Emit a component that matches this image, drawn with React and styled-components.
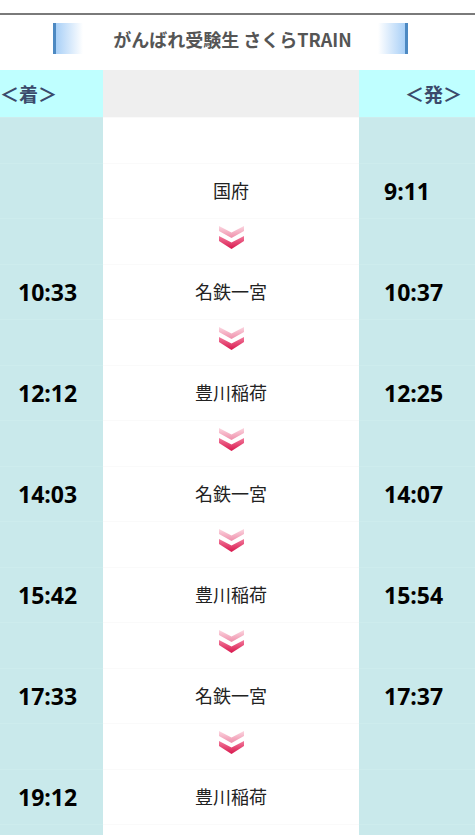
import React from "react";
import styled, { createGlobalStyle } from "styled-components";

const Global = createGlobalStyle`
  html, body { margin: 0; padding: 0; background: #fff; }
  body { font-family: "Noto Sans CJK JP", "Noto Sans", sans-serif; overflow: hidden; }
`;

const Page = styled.div`
  width: 475px;
`;

const TopRule = styled.div`
  height: 13px;
  border-bottom: 2px solid #7a7a7a;
`;

const TitleBar = styled.div`
  height: 55px;
  box-sizing: border-box;
  display: flex;
  align-items: center;
  justify-content: center;
  padding-right: 14px;
  padding-bottom: 8px;
`;

const Deco = styled.div`
  width: 30px;
  height: 31px;
  box-sizing: border-box;
  ${(p) =>
    p.$right
      ? `border-right: 3px solid #4d89c2; background: linear-gradient(to left, #a9d0f7, #ffffff);`
      : `border-left: 3px solid #4d89c2; background: linear-gradient(to right, #a9d0f7, #ffffff);`}
`;

const Title = styled.h1`
  margin: 0;
  width: 295px;
  text-align: center;
  font-family: "Noto Sans CJK JP", "Noto Sans", sans-serif;
  font-size: 18px;
  font-weight: 700;
  color: #555;
  line-height: 1;
  padding-left: 4px;
  box-sizing: border-box;
`;

const Grid = styled.div`
  display: grid;
  grid-template-columns: 103px 256px 116px;
`;

const HeadCell = styled.div`
  height: 47px;
  display: flex;
  align-items: center;
  background: ${(p) => (p.$mid ? "#efefef" : "#bfffff")};
  justify-content: ${(p) => (p.$align === "right" ? "flex-end" : "flex-start")};
  padding-right: ${(p) => (p.$align === "right" ? "13px" : "0")};
  font-size: 19px;
  font-weight: 700;
  color: #3b4a6b;
`;

const Cell = styled.div`
  box-sizing: border-box;
  height: ${(p) => p.$h}px;
  display: flex;
  align-items: center;
  background: ${(p) => (p.$mid ? "#ffffff" : "#c9e9eb")};
  border-top: 1px solid ${(p) => (p.$mid ? "#fafafa" : "#cdeced")};
  justify-content: ${(p) => (p.$mid ? "center" : "flex-start")};
  padding-left: ${(p) => p.$pl || 0}px;
`;

const Time = styled.span`
  font-family: "Open Sans", "Noto Sans", sans-serif;
  font-size: 23px;
  font-weight: 700;
  color: #000;
  margin-top: -1px;
`;

const Station = styled.span`
  font-family: "Noto Sans CJK JP", sans-serif;
  font-size: 18px;
  color: #222;
  margin-top: -2px;
`;

const Arrow = () => (
  <svg width="27" height="26" viewBox="0 0 27 26" style={{ marginTop: -7 }}>
    <defs>
      <linearGradient id="ga" x1="0" y1="0" x2="0" y2="1">
        <stop offset="0" stopColor="#fbd6e0" />
        <stop offset="1" stopColor="#ef8eaa" />
      </linearGradient>
      <linearGradient id="gb" x1="0" y1="0" x2="0" y2="1">
        <stop offset="0" stopColor="#f27a9c" />
        <stop offset="1" stopColor="#d8164c" />
      </linearGradient>
    </defs>
    <polygon points="1,1 13.5,7.5 26,1 26,6 13.5,13 1,6" fill="url(#ga)" />
    <polygon points="1,11 13.5,17.5 26,11 26,16 13.5,24 1,16" fill="url(#gb)" />
  </svg>
);

const stops = [
  { arr: "", name: "国府", dep: "9:11" },
  { arr: "10:33", name: "名鉄一宮", dep: "10:37" },
  { arr: "12:12", name: "豊川稲荷", dep: "12:25" },
  { arr: "14:03", name: "名鉄一宮", dep: "14:07" },
  { arr: "15:42", name: "豊川稲荷", dep: "15:54" },
  { arr: "17:33", name: "名鉄一宮", dep: "17:37" },
  { arr: "19:12", name: "豊川稲荷", dep: "" },
];

export default function App() {
  return (
    <Page>
      <Global />
      <TopRule />
      <TitleBar>
        <Deco />
        <Title>がんばれ受験生 さくらTRAIN</Title>
        <Deco $right />
      </TitleBar>
      <Grid>
        <HeadCell>＜着＞</HeadCell>
        <HeadCell $mid />
        <HeadCell $align="right">＜発＞</HeadCell>

        <Cell $h={46} />
        <Cell $h={46} $mid />
        <Cell $h={46} />

        {stops.map((s, i) => (
          <React.Fragment key={i}>
            <Cell $h={55} $pl={18}>
              <Time>{s.arr}</Time>
            </Cell>
            <Cell $h={55} $mid>
              <Station>{s.name}</Station>
            </Cell>
            <Cell $h={55} $pl={25}>
              <Time>{s.dep}</Time>
            </Cell>
            {i < stops.length - 1 && (
              <>
                <Cell $h={46} />
                <Cell $h={46} $mid>
                  <Arrow />
                </Cell>
                <Cell $h={46} />
              </>
            )}
          </React.Fragment>
        ))}

        <Cell $h={46} />
        <Cell $h={46} $mid />
        <Cell $h={46} />
      </Grid>
    </Page>
  );
}
